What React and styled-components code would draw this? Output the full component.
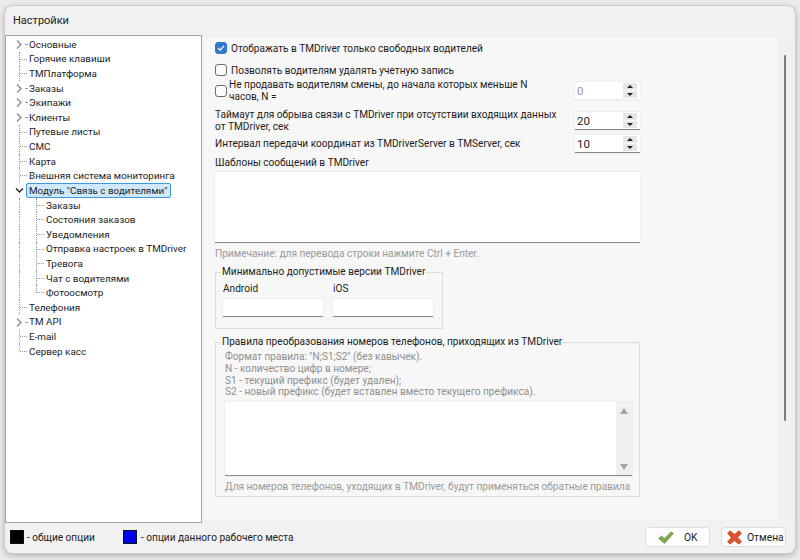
import React from 'react';
import styled, { createGlobalStyle } from 'styled-components';

const GlobalStyle = createGlobalStyle`
  html, body { margin: 0; padding: 0; width: 800px; height: 560px; overflow: hidden; background: #ebebeb; }
  * { box-sizing: border-box; }
`;

const Page = styled.div`
  width: 800px;
  height: 560px;
  padding: 6px 5px 7px 5px;
  font-family: Roboto, "Liberation Sans", sans-serif;
  font-size: 10.1px;
  color: #1c1c1c;
`;

const Window = styled.div`
  width: 790px;
  height: 547px;
  background: #f1f1f1;
  border-radius: 7px;
  box-shadow: 0 0 0 1px #cbcbcb, 0 2px 6px rgba(0, 0, 0, 0.3);
  display: flex;
  flex-direction: column;
`;

const TitleBar = styled.div`
  height: 29px;
  padding: 7px 0 0 8px;
  font-size: 11px;
  line-height: 16px;
  color: #222;
`;

const Body = styled.div`
  height: 488px;
  display: flex;
  gap: 2px;
`;

const Tree = styled.div`
  width: 197px;
  background: #fff;
  border: 1px solid #9fa4a8;
  padding: 1px 0 0 0;
  font-size: 9.9px;
`;

const TreeRow = styled.div`
  height: 14.62px;
  display: flex;
  align-items: center;
  white-space: nowrap;
  padding-left: ${p => (p.$child ? 40 : 23)}px;
  position: relative;
`;

const RootLine = styled.span`
  position: absolute;
  left: 13px;
  top: 0;
  height: ${p => (p.$last ? '50%' : '100%')};
  border-left: 1px dotted #999;
`;

const ChildLine = styled.span`
  position: absolute;
  left: 30px;
  top: 0;
  height: ${p => (p.$last ? '50%' : '100%')};
  border-left: 1px dotted #999;
`;

const Dots = styled.span`
  position: absolute;
  left: ${p => (p.$child ? 31 : p.$short ? 19 : 14)}px;
  width: ${p => (p.$short ? 2 : 7)}px;
  top: 7px;
  border-top: 1px dotted #999;
`;

const Arrow = styled.svg`
  position: absolute;
  left: 8px;
  top: 2px;
  width: 11px;
  height: 11px;
`;

const Selected = styled.span`
  background: #cfe8fc;
  border: 1px solid #3d9ae0;
  border-radius: 2px;
  padding: 0 3px 0 2px;
  margin-left: -3px;
  height: 15px;
  line-height: 13px;
`;

const Panel = styled.div`
  flex: 1;
  margin: 3px 2px 3px 0;
  background: #f7f7f7;
  display: flex;
`;

const Content = styled.div`
  flex: 1;
  padding: 3px 0 0 11px;
  display: flex;
  flex-direction: column;
`;

const ScrollTrack = styled.div`
  width: 16px;
  background: #f0f0f0;
  display: flex;
  justify-content: center;
  padding-top: 17px;
`;

const ScrollThumb = styled.div`
  width: 2px;
  height: 366px;
  background: #7b7b7b;
  border-radius: 1px;
`;

const CheckRow = styled.div`
  display: flex;
  align-items: center;
  gap: 4px;
  height: ${p => p.$h || 14}px;
  margin-top: ${p => p.$mt || 0}px;
`;

const Box = styled.span`
  width: 12px;
  height: 12px;
  flex: none;
  border-radius: 3px;
  border: 1px solid ${p => (p.$on ? '#2f7ac9' : '#6e6e6e')};
  background: ${p => (p.$on ? '#2f7ac9' : '#fbfbfb')};
  display: flex;
  align-items: center;
  justify-content: center;
`;

const FieldRow = styled.div`
  display: flex;
  width: 425px;
  justify-content: space-between;
  align-items: center;
  margin-top: ${p => p.$mt || 0}px;
`;

const Label = styled.div`
  line-height: 12px;
  width: ${p => p.$w || 'auto'};
  margin-left: ${p => p.$ml || 0}px;
`;

const Spin = styled.div`
  width: 65px;
  height: 18px;
  flex: none;
  background: #fff;
  border-bottom: 1px solid ${p => (p.$off ? '#f0f0f0' : '#8b8b8b')};
  outline: 1px solid #eee;
  display: flex;
  align-items: center;
  justify-content: space-between;
  padding: 0 3px 0 2px;
  color: ${p => (p.$off ? '#999' : '#1c1c1c')};
  font-size: 11.5px;
`;

const SpinButtons = styled.div`
  display: flex;
  flex-direction: column;
  gap: 1px;
`;

const SpinButton = styled.span`
  width: 14px;
  height: 7px;
  background: #e6e6e6;
  display: flex;
  align-items: center;
  justify-content: center;
  &::after {
    content: '';
    border-left: 3px solid transparent;
    border-right: 3px solid transparent;
    ${p => (p.$down ? 'border-top: 3px solid #222;' : 'border-bottom: 3px solid #222;')}
  }
`;

const Heading = styled.div`
  margin-top: ${p => p.$mt || 0}px;
  line-height: 14px;
`;

const Input = styled.div`
  background: #fff;
  border-bottom: 1px solid #8b8b8b;
  outline: 1px solid #eee;
  width: ${p => p.$w}px;
  height: ${p => p.$h}px;
`;

const Memo = styled(Input)`
  margin-top: 2px;
`;

const Hint = styled.div`
  color: #9a9a9a;
  line-height: 13px;
  margin-top: ${p => p.$mt || 0}px;
`;

const Group = styled.fieldset`
  margin: ${p => p.$mt}px 0 0 0;
  padding: 0;
  border: 1px solid #dcdcdc;
  width: ${p => p.$w}px;
  height: ${p => p.$h}px;
  min-width: 0;
`;

const Legend = styled.legend`
  padding: 0 1px;
  margin-left: 5px;
  line-height: 12px;
  white-space: nowrap;
`;

const Versions = styled.div`
  display: flex;
  gap: 10px;
  padding: 5px 0 0 7px;
`;

const VersionCol = styled.div`
  display: flex;
  flex-direction: column;
  gap: 5px;
`;

const RuleText = styled.div`
  color: #8f8f8f;
  line-height: 11.8px;
  padding: 3px 0 0 9px;
`;

const RuleMemo = styled.div`
  width: 407px;
  height: 74px;
  margin: 4px 0 0 9px;
  background: #fff;
  border-bottom: 1px solid #8b8b8b;
  outline: 1px solid #eee;
  display: flex;
  justify-content: flex-end;
`;

const RuleScroll = styled.div`
  width: 16px;
  background: #f0f0f0;
  display: flex;
  flex-direction: column;
  align-items: center;
  justify-content: space-between;
  padding: 6px 0 5px;
`;

const RuleArrow = styled.span`
  border-left: 4px solid transparent;
  border-right: 4px solid transparent;
  ${p => (p.$down ? 'border-top: 6px solid #a5a5a5;' : 'border-bottom: 6px solid #a5a5a5;')}
`;

const RuleFoot = styled.div`
  color: #9a9a9a;
  padding: 4px 0 0 9px;
  line-height: 13px;
  white-space: nowrap;
`;

const Footer = styled.div`
  flex: 1;
  display: flex;
  align-items: center;
  padding: 0 9px 2px 5px;
`;

const Legends = styled.div`
  flex: 1;
  display: flex;
  align-items: center;
`;

const Swatch = styled.span`
  width: 14px;
  height: 14px;
  background: ${p => p.$color};
  border: 1px solid #111;
  margin-right: ${p => p.$gap}px;
`;

const SwatchText = styled.span`
  width: ${p => p.$w}px;
`;

const Button = styled.div`
  width: 65px;
  height: 20px;
  margin-left: 11px;
  background: #fdfdfd;
  border: 1px solid #dedede;
  border-radius: 4px;
  display: flex;
  align-items: center;
  gap: ${p => p.$gap}px;
  font-size: 10.3px;
  padding-left: ${p => p.$pad}px;
`;

const items = [
  { t: 'Основные', a: '>' },
  { t: 'Горячие клавиши' },
  { t: 'ТМПлатформа' },
  { t: 'Заказы', a: '>' },
  { t: 'Экипажи', a: '>' },
  { t: 'Клиенты', a: '>' },
  { t: 'Путевые листы' },
  { t: 'СМС' },
  { t: 'Карта' },
  { t: 'Внешняя система мониторинга' },
  { t: 'Модуль "Связь с водителями"', a: 'v', sel: true },
  { t: 'Заказы', c: true },
  { t: 'Состояния заказов', c: true },
  { t: 'Уведомления', c: true },
  { t: 'Отправка настроек в TMDriver', c: true },
  { t: 'Тревога', c: true },
  { t: 'Чат с водителями', c: true },
  { t: 'Фотоосмотр', c: true, lastChild: true },
  { t: 'Телефония' },
  { t: 'TM API', a: '>' },
  { t: 'E-mail' },
  { t: 'Сервер касс', last: true },
];

const SpinBox = ({ value, off }) => (
  <Spin $off={off}>
    <span>{value}</span>
    <SpinButtons>
      <SpinButton />
      <SpinButton $down />
    </SpinButtons>
  </Spin>
);

export default function App() {
  return (
    <Page>
      <GlobalStyle />
      <Window>
        <TitleBar>Настройки</TitleBar>
        <Body>
          <Tree>
            {items.map((it, i) => (
              <TreeRow key={i} $child={it.c}>
                {!it.a && <RootLine $last={it.last} />}
                {it.c && <ChildLine $last={it.lastChild} />}
                {!it.a && <Dots $child={it.c} />}
                {it.a === '>' && <Dots $short />}
                {it.a === '>' && (
                  <Arrow viewBox="0 0 11 11"><path d="M3 1.5 L7 5.5 L3 9.5" fill="none" stroke="#8a8a8a" strokeWidth="1.3" /></Arrow>
                )}
                {it.a === 'v' && (
                  <Arrow viewBox="0 0 11 11"><path d="M2 3.5 L5.5 7 L9 3.5" fill="none" stroke="#222" strokeWidth="1.4" /></Arrow>
                )}
                {it.sel ? <Selected>{it.t}</Selected> : it.t}
              </TreeRow>
            ))}
          </Tree>
          <Panel>
            <Content>
              <CheckRow>
                <Box $on>
                  <svg width="8" height="8" viewBox="0 0 8 8"><path d="M1 4 L3.2 6.2 L7 1.8" fill="none" stroke="#fff" strokeWidth="1.2" /></svg>
                </Box>
                Отображать в TMDriver только свободных водителей
              </CheckRow>
              <CheckRow $mt={8}><Box />Позволять водителям удалять учетную запись</CheckRow>
              <FieldRow $mt={2}>
                <CheckRow $h={24}>
                  <Box />
                  <Label $ml={-2} $w="310px">Не продавать водителям смены, до начала которых меньше N часов, N =</Label>
                </CheckRow>
                <SpinBox value="0" off />
              </FieldRow>
              <FieldRow $mt={6}>
                <Label $w="342px">Таймаут для обрыва связи с TMDriver при отсутствии входящих данных от TMDriver, сек</Label>
                <SpinBox value="20" />
              </FieldRow>
              <FieldRow $mt={2}>
                <Label>Интервал передачи координат из TMDriverServer в TMServer, сек</Label>
                <SpinBox value="10" />
              </FieldRow>
              <Heading $mt={3}>Шаблоны сообщений в TMDriver</Heading>
              <Memo $w={425} $h={71} />
              <Hint $mt={4}>Примечание: для перевода строки нажмите Ctrl + Enter.</Hint>
              <Group $mt={6} $w={228} $h={63}>
                <Legend>Минимально допустимые версии TMDriver</Legend>
                <Versions>
                  <VersionCol>
                    Android
                    <Input $w={100} $h={18} />
                  </VersionCol>
                  <VersionCol>
                    iOS
                    <Input $w={100} $h={18} />
                  </VersionCol>
                </Versions>
              </Group>
              <Group $mt={7} $w={425} $h={161}>
                <Legend>Правила преобразования номеров телефонов, приходящих из TMDriver</Legend>
                <RuleText>
                  Формат правила: "N;S1;S2" (без кавычек).<br />
                  N - количество цифр в номере;<br />
                  S1 - текущий префикс (будет удален);<br />
                  S2 - новый префикс (будет вставлен вместо текущего префикса).
                </RuleText>
                <RuleMemo>
                  <RuleScroll><RuleArrow /><RuleArrow $down /></RuleScroll>
                </RuleMemo>
                <RuleFoot>Для номеров телефонов, уходящих в TMDriver, будут применяться обратные правила</RuleFoot>
              </Group>
            </Content>
            <ScrollTrack><ScrollThumb /></ScrollTrack>
          </Panel>
        </Body>
        <Footer>
          <Legends>
            <Swatch $color="#000" $gap={3} />
            <SwatchText $w={96}>- общие опции</SwatchText>
            <Swatch $color="#0000f0" $gap={4} />
            <span>- опции данного рабочего места</span>
          </Legends>
          <Button $pad={12} $gap={10}>
            <svg width="16" height="13" viewBox="0 0 16 13"><path d="M.5 7.5 L3.5 5 L6.5 7.5 L13 .8 L15.5 2.5 L6.5 12.5 Z" fill="#7ea84c" stroke="#6a9640" strokeWidth=".6" strokeLinejoin="round" /></svg>
            OK
          </Button>
          <Button $pad={5} $gap={5}>
            <svg width="15" height="15" viewBox="0 0 15 15"><path d="M3 .8 L7.5 4.4 L12 .8 L14.4 3.2 L10.6 7.5 L14.4 11.8 L12 14.2 L7.5 10.6 L3 14.2 L.6 11.8 L4.4 7.5 L.6 3.2 Z" fill="#dc5230" stroke="#cb4222" strokeWidth=".8" strokeLinejoin="round" /></svg>
            Отмена
          </Button>
        </Footer>
      </Window>
    </Page>
  );
}
